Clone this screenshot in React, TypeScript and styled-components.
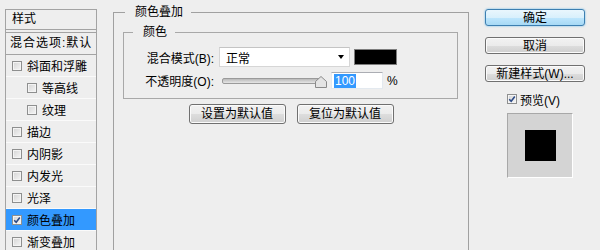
import styled, { createGlobalStyle } from "styled-components"

const GlobalStyle = createGlobalStyle`
  html, body {
    margin: 0;
    padding: 0;
    background: #eeeeee;
  }
  body {
    font-family: "Liberation Sans", "Noto Sans CJK SC", sans-serif;
    font-size: 12px;
    color: #000000;
  }
`

const Page = styled.div`
  display: flex;
  align-items: flex-start;
  width: 600px;
  height: 250px;
  padding-left: 5px;
  box-sizing: border-box;
  overflow: hidden;
`

/* ---------- left list of effects ---------- */

const StyleList = styled.div`
  flex: 0 0 92px;
  box-sizing: border-box;
  height: 260px;
  margin-top: 9px;
  border: 1px solid #a3a3a3;
  border-bottom: none;
`

const ListHeader = styled.div`
  height: 19px;
  line-height: 19px;
  padding-left: 6px;
  border-bottom: 1px solid #a3a3a3;
  margin-bottom: 2px;
`

const BlendRow = styled.div`
  height: 21px;
  line-height: 21px;
  padding-left: 4px;
  border-top: 1px solid #a3a3a3;
  border-bottom: 1px solid #a3a3a3;
  letter-spacing: 1px;
  white-space: nowrap;
`

const EffectRow = styled.div<{ $indent?: boolean; $selected?: boolean }>`
  display: flex;
  align-items: center;
  gap: 5px;
  height: 21px;
  padding-left: ${({ $indent }) => ($indent ? 21 : 6)}px;
  border-bottom: 1px solid #fafafa;
  background: ${({ $selected }) => ($selected ? "#3399ff" : "transparent")};
  white-space: nowrap;
`

const Box = styled.span`
  display: inline-flex;
  align-items: center;
  justify-content: center;
  flex: 0 0 auto;
  width: 10px;
  height: 10px;
  box-sizing: border-box;
  border: 1px solid #8e8f8f;
  background: linear-gradient(135deg, #d4d4d4, #f6f6f6);
  box-shadow: inset 0 0 0 1px #f4f4f4;
`

function CheckBox({ checked }: { checked?: boolean }) {
  return (
    <Box>
      {checked ? (
        <svg width="8" height="8" viewBox="0 0 8 8">
          <path d="M1.2 4.2 L3.2 6.2 L6.8 1.6" fill="none" stroke="#2c4a86" strokeWidth="1.6" />
        </svg>
      ) : null}
    </Box>
  )
}

const effects: { label: string; indent?: boolean; checked?: boolean }[] = [
  { label: "斜面和浮雕" },
  { label: "等高线", indent: true },
  { label: "纹理", indent: true },
  { label: "描边" },
  { label: "内阴影" },
  { label: "内发光" },
  { label: "光泽" },
  { label: "颜色叠加", checked: true },
  { label: "渐变叠加" },
]

/* ---------- middle settings ---------- */

const Group = styled.fieldset`
  flex: 0 0 356px;
  box-sizing: border-box;
  min-height: 270px;
  min-inline-size: 0;
  margin: 5px 0 0 16px;
  padding: 0;
  border: 1px solid #a0a0a0;
`

const Legend = styled.legend<{ $inset: number }>`
  margin-left: ${({ $inset }) => $inset}px;
  padding: 0 8px 0 10px;
  line-height: 14px;
`

const SubGroup = styled.fieldset`
  box-sizing: border-box;
  width: 335px;
  min-inline-size: 0;
  margin: 6px 0 0 9px;
  padding: 8px 0 9px 0;
  border: 1px solid #a8a8a8;
`

const Controls = styled.div`
  display: grid;
  grid-template-columns: 90px auto;
  column-gap: 5px;
  row-gap: 5px;
  align-items: center;
`

const Label = styled.span`
  text-align: right;
  white-space: nowrap;
`

const ControlLine = styled.div`
  display: flex;
  align-items: center;
  gap: 4px;
`

const Select = styled.div`
  display: flex;
  align-items: center;
  justify-content: space-between;
  width: 131px;
  height: 20px;
  box-sizing: border-box;
  padding: 0 5px 0 6px;
  border: 1px solid #d6d6d6;
  border-top-color: #c4c4c4;
  background: #ffffff;
`

const Arrow = styled.span`
  width: 0;
  height: 0;
  border-left: 3.5px solid transparent;
  border-right: 3.5px solid transparent;
  border-top: 4px solid #000000;
`

const Swatch = styled.div`
  width: 43px;
  height: 16px;
  box-sizing: border-box;
  border: 1px solid #7d7d7d;
  background: #000000;
`

const Slider = styled.div`
  position: relative;
  display: flex;
  align-items: center;
  width: 107px;
  height: 17px;
`

const Track = styled.div`
  width: 96px;
  height: 4px;
  margin-left: 3px;
  border: 1px solid #9a9a9a;
  border-radius: 2px;
  background: linear-gradient(#b9b9b9, #e6e6e6);
`

const Thumb = styled.svg`
  position: absolute;
  left: 96px;
  top: 4px;
`

const NumberField = styled.div`
  display: flex;
  align-items: center;
  width: 52px;
  height: 17px;
  box-sizing: border-box;
  margin-left: 1px;
  padding-left: 2px;
  border: 1px solid #e3e9ef;
  border-top-color: #abadb3;
  background: #ffffff;
`

const Selected = styled.span`
  padding: 0 1px;
  background: #3399ff;
  color: #ffffff;
  line-height: 14px;
`

const ButtonRow = styled.div`
  display: flex;
  justify-content: center;
  gap: 11px;
  margin-top: 5px;
`

const Button = styled.button<{ $primary?: boolean; $width?: number; $height?: number }>`
  width: ${({ $width }) => $width ?? 97}px;
  height: ${({ $height }) => $height ?? 20}px;
  box-sizing: border-box;
  padding: 0;
  border: 1px solid ${({ $primary }) => ($primary ? "#3c7fb1" : "#707070")};
  border-radius: 3px;
  background: ${({ $primary }) =>
    $primary
      ? "linear-gradient(#e9f6fd, #d9f0fc 50%, #bee6fd 51%, #a7d9f5)"
      : "linear-gradient(#f2f2f2, #ebebeb 50%, #dddddd 51%, #cfcfcf)"};
  box-shadow: ${({ $primary }) => ($primary ? "0 0 2px #5ab2e8" : "inset 0 0 0 1px #fbfbfb")};
  font-family: "Liberation Sans", "Noto Sans CJK SC", sans-serif;
  font-size: 12px;
  line-height: 1;
  color: #000000;
  white-space: nowrap;
  cursor: pointer;
`

/* ---------- right column ---------- */

const Side = styled.div`
  display: flex;
  flex-direction: column;
  align-items: flex-start;
  gap: 11px;
  width: 100px;
  margin: 9px 0 0 16px;
`

const PreviewToggle = styled.label`
  display: flex;
  align-items: center;
  gap: 3px;
  height: 14px;
  margin: -1px 0 0 22px;
  white-space: nowrap;
`

const Preview = styled.div`
  display: flex;
  align-items: center;
  justify-content: center;
  width: 66px;
  height: 65px;
  box-sizing: border-box;
  margin: -4px 0 0 22px;
  border: 1px solid;
  border-color: #a8a8a8 #ffffff #ffffff #a8a8a8;
  background: #d4d4d4;
`

const PreviewSquare = styled.div`
  width: 31px;
  height: 31px;
  background: #000000;
`

export default function App() {
  return (
    <>
      <GlobalStyle />
      <Page>
        <StyleList>
          <ListHeader>样式</ListHeader>
          <BlendRow>混合选项:默认</BlendRow>
          {effects.map((e) => (
            <EffectRow key={e.label} $indent={e.indent} $selected={e.checked}>
              <CheckBox checked={e.checked} />
              {e.label}
            </EffectRow>
          ))}
        </StyleList>

        <Group>
          <Legend $inset={11}>颜色叠加</Legend>
          <SubGroup>
            <Legend $inset={9}>颜色</Legend>
            <Controls>
              <Label>混合模式(B):</Label>
              <ControlLine>
                <Select>
                  正常
                  <Arrow />
                </Select>
                <Swatch />
              </ControlLine>
              <Label>不透明度(O):</Label>
              <ControlLine>
                <Slider>
                  <Track />
                  <Thumb width="12" height="12" viewBox="0 0 12 12">
                    <path
                      d="M6 0.5 L11.5 5.5 L11.5 11.5 L0.5 11.5 L0.5 5.5 Z"
                      fill="#e4e4e4"
                      stroke="#8a8a8a"
                    />
                  </Thumb>
                </Slider>
                <NumberField>
                  <Selected>100</Selected>
                </NumberField>
                %
              </ControlLine>
            </Controls>
          </SubGroup>
          <ButtonRow>
            <Button type="button">设置为默认值</Button>
            <Button type="button">复位为默认值</Button>
          </ButtonRow>
        </Group>

        <Side>
          <Button type="button" $primary $width={100} $height={17}>
            确定
          </Button>
          <Button type="button" $width={100} $height={17}>
            取消
          </Button>
          <Button type="button" $width={100} $height={17}>
            新建样式(W)...
          </Button>
          <PreviewToggle>
            <CheckBox checked />
            预览(V)
          </PreviewToggle>
          <Preview>
            <PreviewSquare />
          </Preview>
        </Side>
      </Page>
    </>
  )
}
